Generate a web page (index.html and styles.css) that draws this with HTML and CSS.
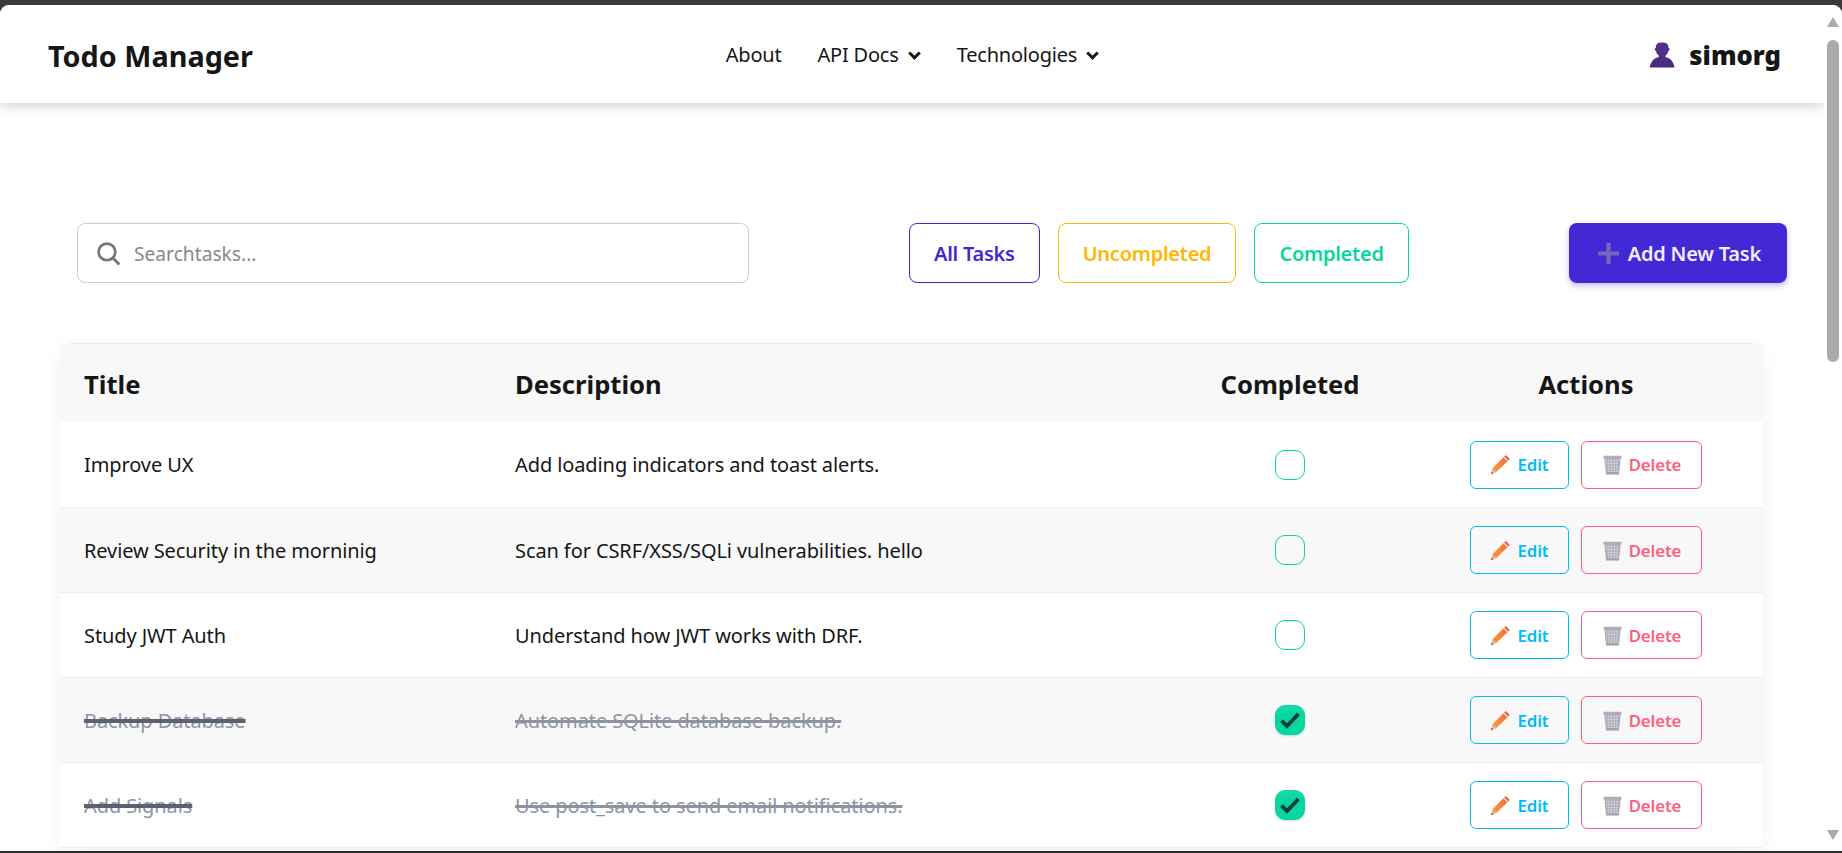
FILE: index.html
```html
<!DOCTYPE html>
<html lang="en">

<head>
    <meta charset="UTF-8" />
    <title>Todo Manager</title>
    <link rel="stylesheet" href="styles.css">
</head>

<body>
    <svg class="icon-defs" width="0" height="0" aria-hidden="true">
        <defs>
            <linearGradient id="pencilBody" x1="0" y1="1" x2="1" y2="0">
                <stop offset="0" stop-color="#ff9a3d" />
                <stop offset="1" stop-color="#f56a2c" />
            </linearGradient>
            <linearGradient id="userFill" x1="0" y1="0" x2="0" y2="1">
                <stop offset="0" stop-color="#54308f" />
                <stop offset="1" stop-color="#4a2a80" />
            </linearGradient>
            <pattern id="binMesh" width="2.6" height="2.6" patternUnits="userSpaceOnUse">
                <rect width="2.6" height="2.6" fill="#aaa6b4" />
                <circle cx="1.3" cy="1.3" r=".8" fill="#ecebf0" />
            </pattern>
            <symbol id="iconPencil" viewBox="0 0 20 20">
                <path d="M1 19l1.200-5.200 3.600 3.600z" fill="#e8b48f" />
                <path d="M1 19l.5-2.200 1.700 1.700z" fill="#6d4c50" />
                <path d="M2.200 13.800L13.600 2.400l3.800 3.800L5.800 17.400z" fill="url(#pencilBody)" />
                <path d="M13.600 2.400l1.500-1.500 3.800 3.800-1.500 1.500z" fill="#f0583f" />
                <path d="M12.700 3.300l.9-.9 3.800 3.800-.9.9z" fill="#dcd8e0" />
            </symbol>
            <symbol id="iconBin" viewBox="0 0 20 20">
                <path d="M2.800 4h14.400l-1.500 15H4.300z" fill="url(#binMesh)" stroke="#a9a5b3" stroke-width="1" />
                <rect x="1.500" y="1.600" width="17" height="2.800" rx=".6" fill="#b0acb9" />
                <rect x="4.300" y="17.200" width="11.400" height="2" fill="#a5a1af" />
            </symbol>
            <symbol id="iconCheck" viewBox="0 0 20 20">
                <path d="M3 10.500l4.500 4.500 9.500-10" fill="none" stroke="#0c3f3a" stroke-width="3.200" />
            </symbol>
        </defs>
    </svg>

    <div class="window">
        <div class="page">
            <nav class="navbar">
                <a class="brand" href="#">Todo Manager</a>
                <div class="nav-links">
                    <a href="#">About</a>
                    <a href="#">API Docs <span class="caret"></span></a>
                    <a href="#">Technologies <span class="caret"></span></a>
                </div>
                <div class="nav-user">
                    <svg class="user-icon" viewBox="0 0 26 26" aria-hidden="true">
                        <path
                            d="M6.800 6C6.800 2 8.500.5 13 .5s6.500 1.500 6.500 5.500c1 .1 1.300.7 1.100 1.600-.2.8-.6 1.200-1.300 1.300-.4 2.200-1.400 3.600-2.800 4.600V15c3.900 1 7.600 3.100 9.200 10.500H.6C2.200 18.100 5.900 16 9.800 15v-1.500C8.400 12.500 7.400 11.100 7 8.900c-.7-.1-1.100-.5-1.300-1.300-.2-.9.1-1.500 1.100-1.600z"
                            fill="url(#userFill)" />
                    </svg>
                    <span class="user-name">simorg</span>
                </div>
            </nav>

            <main class="content">
                <div class="toolbar">
                    <label class="search">
                        <svg class="search-icon" viewBox="0 0 24 24" aria-hidden="true">
                            <circle cx="10.500" cy="10.500" r="8" fill="none" stroke="#777" stroke-width="2.600" />
                            <path d="M16.500 16.500l6 6" stroke="#777" stroke-width="2.800" />
                        </svg>
                        <input type="text" placeholder="Searchtasks...">
                    </label>
                    <div class="filters">
                        <button class="filter filter-all" type="button">All Tasks</button>
                        <button class="filter filter-open" type="button">Uncompleted</button>
                        <button class="filter filter-done" type="button">Completed</button>
                    </div>
                    <button class="add-btn" type="button">
                        <svg class="plus-icon" viewBox="0 0 20 20" aria-hidden="true">
                            <path d="M8 0h4v8h8v4h-8v8H8v-8H0V8h8z" fill="#7a66b8" />
                        </svg>
                        Add New Task
                    </button>
                </div>

                <div class="table-card">
                    <table class="task-table">
                        <colgroup>
                            <col class="col-title">
                            <col class="col-desc">
                            <col class="col-state">
                            <col class="col-actions">
                        </colgroup>
                        <thead>
                            <tr>
                                <th>Title</th>
                                <th>Description</th>
                                <th class="center">Completed</th>
                                <th class="center">Actions</th>
                            </tr>
                        </thead>
                        <tbody>
                            <tr>
                                <td>Improve UX</td>
                                <td>Add loading indicators and toast alerts.</td>
                                <td class="center"><span class="check"></span></td>
                                <td>
                                    <div class="actions">
                                        <button class="btn-edit" type="button"><svg class="btn-icon"><use href="#iconPencil" /></svg>Edit</button>
                                        <button class="btn-delete" type="button"><svg class="btn-icon"><use href="#iconBin" /></svg>Delete</button>
                                    </div>
                                </td>
                            </tr>
                            <tr>
                                <td>Review Security in the morninig</td>
                                <td>Scan for CSRF/XSS/SQLi vulnerabilities. hello</td>
                                <td class="center"><span class="check"></span></td>
                                <td>
                                    <div class="actions">
                                        <button class="btn-edit" type="button"><svg class="btn-icon"><use href="#iconPencil" /></svg>Edit</button>
                                        <button class="btn-delete" type="button"><svg class="btn-icon"><use href="#iconBin" /></svg>Delete</button>
                                    </div>
                                </td>
                            </tr>
                            <tr>
                                <td>Study JWT Auth</td>
                                <td>Understand how JWT works with DRF.</td>
                                <td class="center"><span class="check"></span></td>
                                <td>
                                    <div class="actions">
                                        <button class="btn-edit" type="button"><svg class="btn-icon"><use href="#iconPencil" /></svg>Edit</button>
                                        <button class="btn-delete" type="button"><svg class="btn-icon"><use href="#iconBin" /></svg>Delete</button>
                                    </div>
                                </td>
                            </tr>
                            <tr class="done">
                                <td><span class="title-text">Backup Database</span></td>
                                <td><span class="desc-text">Automate SQLite database backup.</span></td>
                                <td class="center"><span class="check checked"><svg class="check-icon"><use href="#iconCheck" /></svg></span></td>
                                <td>
                                    <div class="actions">
                                        <button class="btn-edit" type="button"><svg class="btn-icon"><use href="#iconPencil" /></svg>Edit</button>
                                        <button class="btn-delete" type="button"><svg class="btn-icon"><use href="#iconBin" /></svg>Delete</button>
                                    </div>
                                </td>
                            </tr>
                            <tr class="done">
                                <td><span class="title-text">Add Signals</span></td>
                                <td><span class="desc-text">Use post_save to send email notifications.</span></td>
                                <td class="center"><span class="check checked"><svg class="check-icon"><use href="#iconCheck" /></svg></span></td>
                                <td>
                                    <div class="actions">
                                        <button class="btn-edit" type="button"><svg class="btn-icon"><use href="#iconPencil" /></svg>Edit</button>
                                        <button class="btn-delete" type="button"><svg class="btn-icon"><use href="#iconBin" /></svg>Delete</button>
                                    </div>
                                </td>
                            </tr>
                        </tbody>
                    </table>
                </div>
            </main>
        </div>

        <div class="scrollbar" aria-hidden="true">
            <span class="arrow-up"></span>
            <span class="thumb"></span>
            <span class="arrow-down"></span>
        </div>
    </div>
    <div class="bottom-edge"></div>
</body>

</html>
```

FILE: styles.css
```css
* {
    box-sizing: border-box;
}

html,
body {
    height: 100%;
    margin: 0;
    overflow: hidden;
}

body {
    display: flex;
    flex-direction: column;
    padding-top: 5px;
    background: #3a3a3a;
    color: #161616;
    font-family: "Noto Sans", "Open Sans", sans-serif;
}

.icon-defs {
    position: absolute;
}

.window {
    display: flex;
    flex: 1;
    min-height: 0;
    overflow: hidden;
    background: #fff;
    border-radius: 9px 9px 0 0;
}

.bottom-edge {
    height: 2px;
    background: #2b2b2b;
}

.page {
    flex: 1;
    min-width: 0;
    overflow: hidden;
}

/* Навбар */
.navbar {
    display: grid;
    grid-template-columns: 1fr auto 1fr;
    align-items: center;
    height: 98px;
    padding: 2px 43px 0 48px;
    background: #fff;
    box-shadow: 0 4px 10px rgba(0, 0, 0, 0.16);
}

.navbar a {
    color: inherit;
    text-decoration: none;
}

.brand {
    font-size: 28.8px;
    font-weight: 700;
}

.nav-links {
    display: flex;
    gap: 36px;
    margin-top: -2px;
    margin-left: -4px;
    font-size: 20px;
    letter-spacing: -0.2px;
}

.caret {
    display: inline-block;
    width: 9px;
    height: 9px;
    margin: 0 2px 4px 6px;
    border-right: 3px solid #161616;
    border-bottom: 3px solid #161616;
    transform: rotate(45deg);
}

.nav-user {
    display: flex;
    justify-content: flex-end;
    align-items: center;
    gap: 14px;
}

.user-icon {
    width: 26px;
    height: 26px;
}

.user-name {
    font-size: 25.6px;
    font-weight: 900;
}

/* Панель поиска и фильтры */
.content {
    padding-top: 120px;
}

.toolbar {
    display: flex;
    justify-content: space-between;
    align-items: center;
    margin: 0 37px 0 77px;
}

.search {
    display: flex;
    align-items: center;
    gap: 11px;
    width: 672px;
    height: 60px;
    padding: 0 18px;
    border: 1px solid #ccc;
    border-radius: 8px;
}

.search-icon {
    flex: none;
    width: 25px;
    height: 25px;
}

.search input {
    flex: 1;
    border: none;
    outline: none;
    font-family: inherit;
    font-size: 19.2px;
}

.search input::placeholder {
    color: #888;
}

.filters {
    display: flex;
    gap: 18px;
}

.filter {
    height: 60px;
    padding: 0 24px;
    background: #fff;
    border: 1px solid;
    border-radius: 8px;
    font-family: inherit;
    font-size: 20px;
    font-weight: 600;
    letter-spacing: -0.25px;
}

.filter-all {
    color: #4327d6;
    border-color: #4327d6;
}

.filter-open {
    color: #ffb703;
    border-color: #ffb703;
}

.filter-done {
    color: #06d6a0;
    border-color: #06d6a0;
}

.add-btn {
    display: flex;
    align-items: center;
    gap: 9px;
    height: 60px;
    padding: 0 26px 0 29px;
    background: #4328d6;
    border: none;
    border-radius: 8px;
    box-shadow: 0 3px 6px rgba(67, 40, 214, 0.3);
    color: #f0eefc;
    font-family: inherit;
    font-size: 20px;
    font-weight: 600;
    letter-spacing: -0.2px;
}

.plus-icon {
    width: 21px;
    height: 21px;
}

/* Таблица */
.table-card {
    margin: 60px 61px 0 60px;
    border-top: 1px solid #eee;
    border-radius: 12px 12px 0 0;
    box-shadow: 0 4px 20px rgba(0, 0, 0, 0.06);
}

.task-table {
    width: 100%;
    border-collapse: collapse;
    table-layout: fixed;
}

.col-title {
    width: 431px;
}

.col-desc {
    width: 680px;
}

.col-state {
    width: 238px;
}

.col-actions {
    width: 354px;
}

.task-table th {
    height: 78px;
    padding: 2px 24px 0;
    background: #f8f8f8;
    font-size: 25.6px;
    font-weight: 700;
    text-align: left;
}

.task-table td {
    height: 85px;
    padding: 1px 24px 0;
    border-bottom: 1px solid #eee;
    font-size: 20px;
    letter-spacing: -0.1px;
}

.task-table th.center,
.task-table td.center {
    text-align: center;
}

.task-table tbody tr:nth-child(even) {
    background: #f8f8f8;
}

.title-text {
    color: #8d95a5;
    text-decoration: line-through 4px #5c6172;
}

.desc-text {
    color: #8d95a5;
    text-decoration: line-through 3px #8e93a2;
}

.check {
    display: inline-flex;
    justify-content: center;
    align-items: center;
    width: 30px;
    height: 30px;
    vertical-align: middle;
    border: 1.5px solid #06d6a0;
    border-radius: 10px;
}

.check.checked {
    background: linear-gradient(#1cdba9, #06d6a0 30%);
    box-shadow: 0 1px 2px rgba(0, 0, 0, 0.15);
}

.check-icon {
    flex: none;
    width: 24px;
    height: 24px;
}

.actions {
    display: flex;
    justify-content: center;
    gap: 12px;
}

.actions button {
    display: flex;
    justify-content: center;
    align-items: center;
    gap: 6px;
    height: 48px;
    padding: 0;
    background: transparent;
    border: 1px solid;
    border-radius: 6px;
    font-family: inherit;
    font-size: 16.8px;
    font-weight: 600;
    letter-spacing: -0.1px;
}

.btn-edit {
    width: 99px;
    color: #00bbf9;
    border-color: #00bbf9;
}

.btn-delete {
    width: 121px;
    color: #ff5d7d;
    border-color: #ff5d7d;
}

.btn-icon {
    width: 21px;
    height: 21px;
}

/* Полоса прокрутки */
.scrollbar {
    display: flex;
    flex: none;
    flex-direction: column;
    align-items: center;
    width: 18px;
    padding-top: 12px;
    padding-bottom: 11px;
    background: #fff;
}

.arrow-up,
.arrow-down {
    width: 0;
    height: 0;
    border-right: 6px solid transparent;
    border-left: 6px solid transparent;
}

.arrow-up {
    border-bottom: 10px solid #aaa;
}

.arrow-down {
    margin-top: auto;
    border-top: 10px solid #aaa;
}

.thumb {
    width: 12px;
    height: 322px;
    margin-top: 13px;
    background: #aaa;
    border-radius: 6px;
}
```
